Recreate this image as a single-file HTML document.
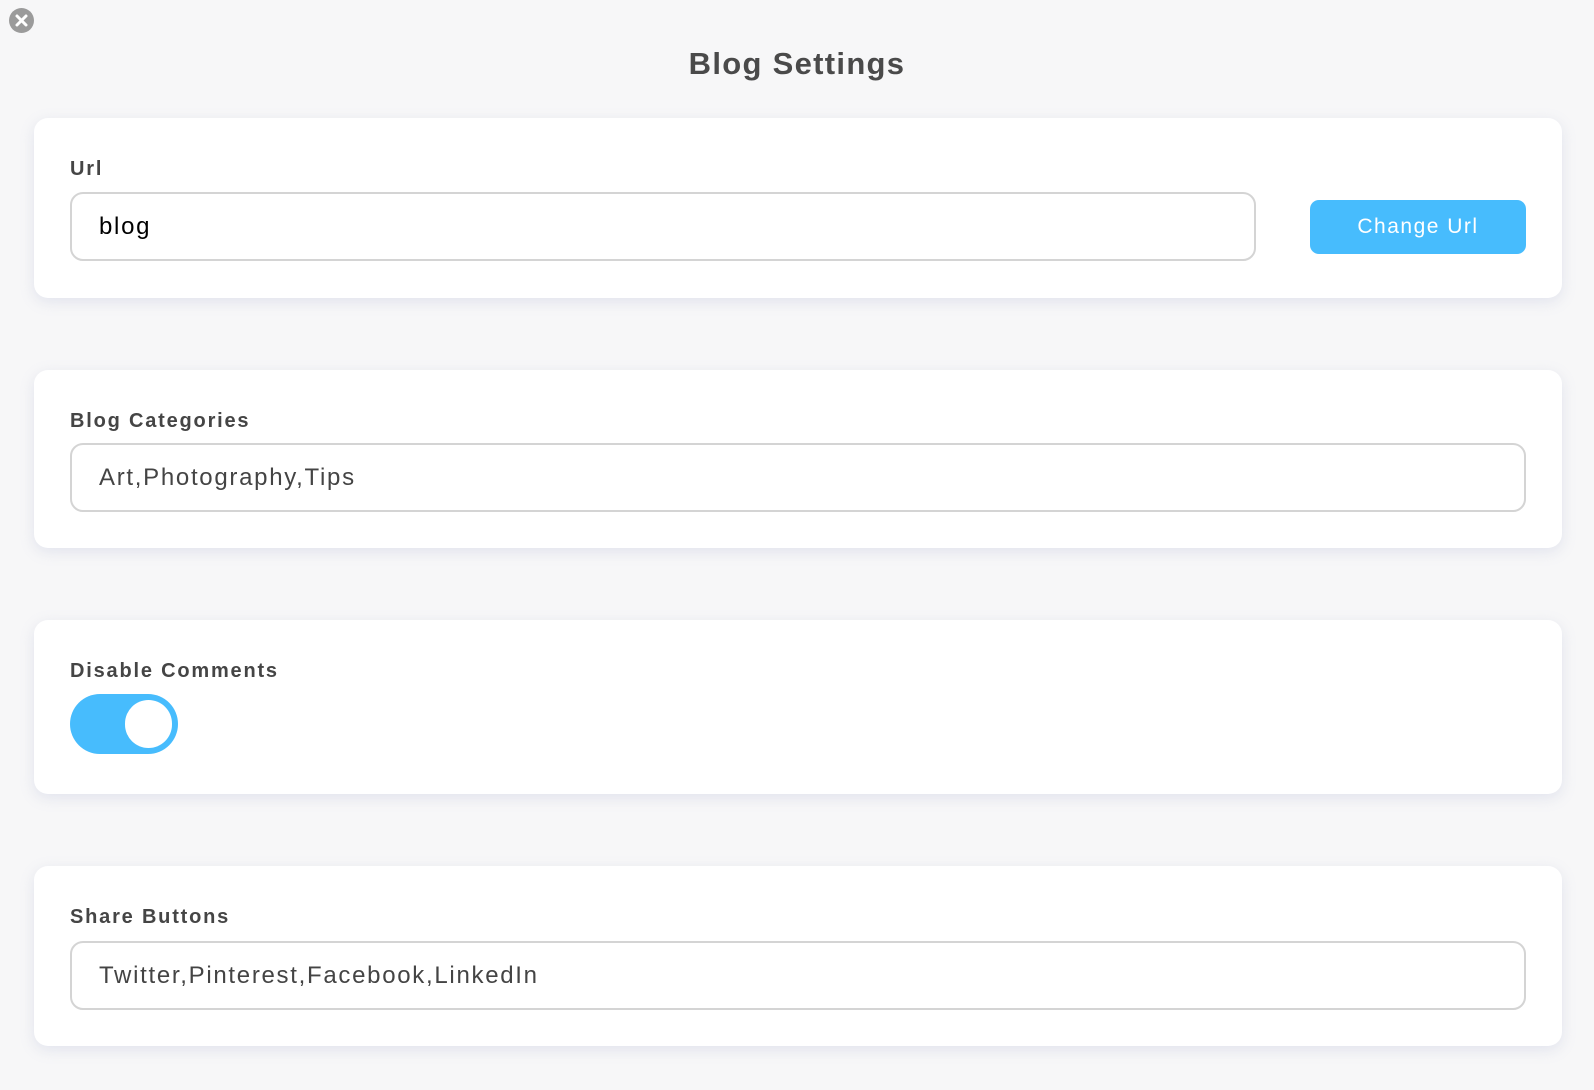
<!DOCTYPE html>
<html><head><style>
*{box-sizing:border-box;margin:0;padding:0}
body{width:1594px;height:1090px;background:#f7f7f8;font-family:"Liberation Sans",sans-serif;position:relative;overflow:hidden}
.close{position:absolute;left:9px;top:8px;width:25px;height:25px;border-radius:50%;background:#9b9b9b}
.title{position:absolute;top:46px;left:0;width:1594px;text-align:center;font-size:31px;font-weight:bold;color:#4a4a4a;letter-spacing:1.3px}
.card{position:absolute;left:34px;width:1528px;background:#fff;border-radius:14px;box-shadow:0 4px 14px rgba(200,205,225,0.45)}
.lbl{position:absolute;left:36px;font-size:20px;font-weight:bold;color:#454545;letter-spacing:1.8px}
.inp{position:absolute;left:36px;height:69px;border:2px solid #d4d4d4;border-radius:13px;font-size:24px;color:#444;padding-left:27px;line-height:65px;letter-spacing:1.7px}
.btn{position:absolute;left:1276px;top:82px;width:216px;height:54px;background:#47bcfd;border-radius:9px;color:#fff;font-size:21px;text-align:center;line-height:54px;letter-spacing:1.5px}
.tog{position:absolute;left:36px;top:74px;width:108px;height:60px;border-radius:30px;background:#47bcfd}
.knob{position:absolute;left:55px;top:6px;width:47px;height:48px;border-radius:24px;background:#fff}
</style></head><body>
<div class="close"><svg width="25" height="25" viewBox="0 0 25 25"><path d="M8 8L17 17M17 8L8 17" stroke="#fff" stroke-width="3" stroke-linecap="round"/></svg></div>
<div class="title">Blog Settings</div>
<div class="card" style="top:118px;height:180px">
 <div class="lbl" style="top:40px">Url</div>
 <div class="inp" style="top:74px;width:1186px;color:#000">blog</div>
 <div class="btn">Change Url</div>
</div>
<div class="card" style="top:370px;height:178px">
 <div class="lbl" style="top:40px">Blog Categories</div>
 <div class="inp" style="top:73px;width:1456px">Art,Photography,Tips</div>
</div>
<div class="card" style="top:620px;height:174px">
 <div class="lbl" style="top:40px">Disable Comments</div>
 <div class="tog"><div class="knob"></div></div>
</div>
<div class="card" style="top:866px;height:180px">
 <div class="lbl" style="top:40px">Share Buttons</div>
 <div class="inp" style="top:75px;width:1456px">Twitter,Pinterest,Facebook,LinkedIn</div>
</div>
</body></html>
